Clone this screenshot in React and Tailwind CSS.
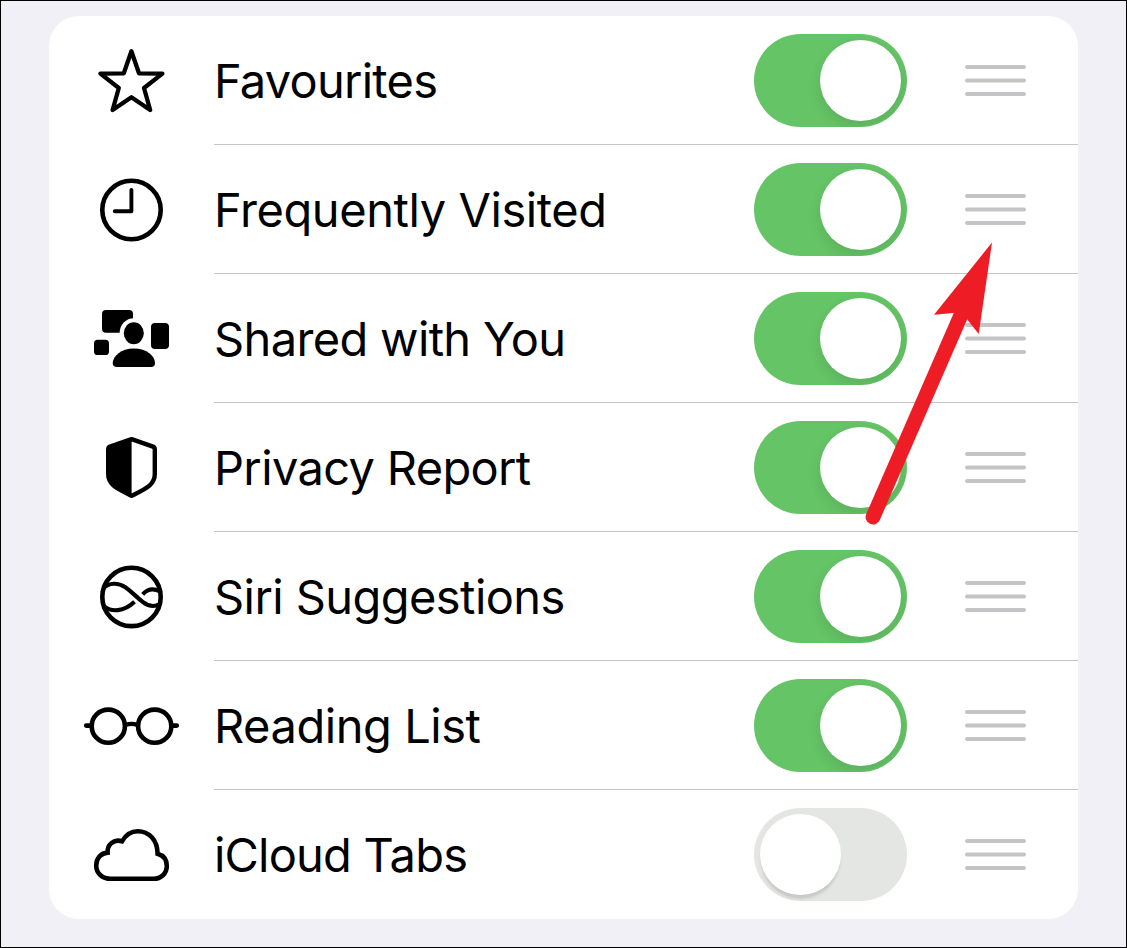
import React, { useState } from 'react';

const StarIcon = () => (
    <path
        d="M51.4 35.2L59 57.3L82.4 57.6L64 72L70.2 94L51.4 81.2L32.6 94L38.8 72L20.4 57.6L43.8 57.3Z"
        fill="none" stroke="currentColor" strokeWidth="4.3" strokeLinejoin="round"
    />
);

const ClockIcon = () => (
    <g fill="none" stroke="currentColor" strokeLinecap="round" strokeLinejoin="round">
        <circle cx="51.5" cy="65" r="29.2" strokeWidth="4.6" />
        <path d="M51.4 45V66.2H34.8" strokeWidth="3.9" />
    </g>
);

const SharedIcon = () => (
    <g fill="currentColor" transform="translate(0 21)">
        <rect x="22" y="15" width="31" height="22.8" rx="4" />
        <ellipse cx="53.8" cy="38.2" rx="14.2" ry="15" fill="white" />
        <ellipse cx="53.8" cy="38.2" rx="10" ry="11" />
        <rect x="71" y="28" width="18" height="26" rx="4" />
        <rect x="14" y="44.8" width="15" height="15.2" rx="3.6" />
        <path d="M37 72Q32.7 72 32.7 68C33 61 41 53.4 53.8 53.4C67 53.4 75 61 75 68Q75 72 71 72Z" />
    </g>
);

const ShieldIcon = () => (
    <g stroke="currentColor" strokeWidth="4.4" strokeLinejoin="round">
        <path d="M51.6 36.2L73 43.6Q74.8 44.3 74.8 46.5V71C74.8 82 66 85.5 51.6 92.8C37 85.5 28.2 82 28.2 71V46.5Q28.2 44.3 30 43.6Z" fill="none" />
        <path d="M51.6 36.2V92.8C37 85.5 28.2 82 28.2 71V46.5Q28.2 44.3 30 43.6Z" fill="currentColor" stroke="none" />
    </g>
);

const SiriIcon = () => (
    <g fill="none" stroke="currentColor" transform="translate(0 23)">
        <circle cx="51.5" cy="41.9" r="29.2" strokeWidth="4.6" />
        <path d="M23 33.5C29 27.5 38 27.5 45 32C52 37 57 42.5 63 47.2C68 51 74 52.5 80 49" strokeWidth="4.1" />
        <path d="M62.7 39.3C67.5 34 73.5 33 80 36.5" strokeWidth="4.1" />
        <path d="M23 50.5C31 57.5 44 57 54.5 46.8" strokeWidth="4.1" />
    </g>
);

const GlassesIcon = () => (
    <g fill="none" stroke="currentColor">
        <circle cx="28.3" cy="65.2" r="16.6" strokeWidth="4.6" />
        <circle cx="74.7" cy="65.2" r="16.6" strokeWidth="4.6" />
        <path d="M45.5 64Q51.5 61.6 57.5 64" strokeWidth="4.2" />
        <path d="M6.3 64.6H10M93 64.6H96.7" strokeWidth="4.8" strokeLinecap="round" />
    </g>
);

const CloudIcon = () => (
    <path
        d="M31 63.8C22 63.8 16.2 58 16.2 50.5C16.2 43.5 21 38 27.6 37.6C27 30 34 23.5 42 26.3C46 19.5 51 16.2 57.5 16.2C69 16.2 77.5 25 77.6 38.8C83.5 40.5 86.8 45 86.8 51C86.8 58.5 81 63.8 73.5 63.8Z"
        transform="translate(0 25)" fill="none" stroke="currentColor" strokeWidth="4.6"
    />
);

const sections = [
    { name: 'Favourites', icon: StarIcon, on: true, tracking: 'tracking-[-0.75px]' },
    { name: 'Frequently Visited', icon: ClockIcon, on: true, tracking: 'tracking-[-0.42px]' },
    { name: 'Shared with You', icon: SharedIcon, on: true, tracking: 'tracking-[-0.65px]' },
    { name: 'Privacy Report', icon: ShieldIcon, on: true, tracking: 'tracking-[-0.65px]' },
    { name: 'Siri Suggestions', icon: SiriIcon, on: true, tracking: 'tracking-[-0.57px]' },
    { name: 'Reading List', icon: GlassesIcon, on: true, tracking: 'tracking-[-0.45px]' },
    { name: 'iCloud Tabs', icon: CloudIcon, on: false, tracking: 'tracking-[-0.8px]' },
];

const Toggle = ({ defaultOn }) => {
    const [on, setOn] = useState(defaultOn);

    return (
        <button
            type="button"
            role="switch"
            aria-checked={on}
            onClick={() => setOn(!on)}
            className={`flex w-[153px] h-[93px] p-1.5 rounded-full overflow-hidden shrink-0 ${on ? 'bg-[#65c466] justify-end' : 'bg-[#e4e6e3] justify-start'}`}
        >
            <span className={`size-[81px] rounded-full bg-white ${on ? 'shadow-[0_6px_12px_2px_rgba(0,0,0,0.08)]' : 'shadow-[0_5px_3px_-1px_rgba(0,0,0,0.13)]'}`} />
        </button>
    );
};

const DragHandle = () => (
    <svg className="w-[61px] h-[31px] shrink-0" viewBox="0 0 61 31" stroke="#c4c4c6" strokeWidth="4" strokeLinecap="round">
        <path d="M2 2H59M2 15.5H59M2 29H59" />
    </svg>
);

const Row = ({ name, icon: Icon, on, tracking, last }) => (
    <li className="flex h-[129px] pl-[31px]">
        <svg className="w-[110px] h-32 shrink-0" viewBox="0 0 110 128">
            <Icon />
        </svg>
        <div className={`flex flex-1 items-center ml-6 pr-[52px] pt-px border-b ${last ? 'border-transparent' : 'border-[#c4c4c6]'}`}>
            <span className={`flex-1 text-[47px] leading-none whitespace-nowrap ${tracking}`}>{name}</span>
            <Toggle defaultOn={on} />
            <div className="ml-[58px]">
                <DragHandle />
            </div>
        </div>
    </li>
);

const App = () => (
    <div className="relative w-[1127px] h-[948px] bg-[#f1f0f6] border border-black pt-[15px] px-12 text-black font-['Inter',sans-serif] overflow-hidden">
        <ul className="w-[1029px] bg-white rounded-[30px] overflow-hidden">
            {sections.map((section, i) => (
                <Row key={section.name} {...section} last={i === sections.length - 1} />
            ))}
        </ul>

        {/* Pointer to the drag handle */}
        <svg className="absolute -left-px -top-px w-[1127px] h-[948px] pointer-events-none" viewBox="0 0 1127 948">
            <path d="M873 517L961 315" stroke="#ee1d25" strokeWidth="14.8" strokeLinecap="round" />
            <path d="M992 242.5L934 314.8L953.3 313L966.7 318.7L978.7 334Z" fill="#ee1d25" />
        </svg>
    </div>
);

export default App;
